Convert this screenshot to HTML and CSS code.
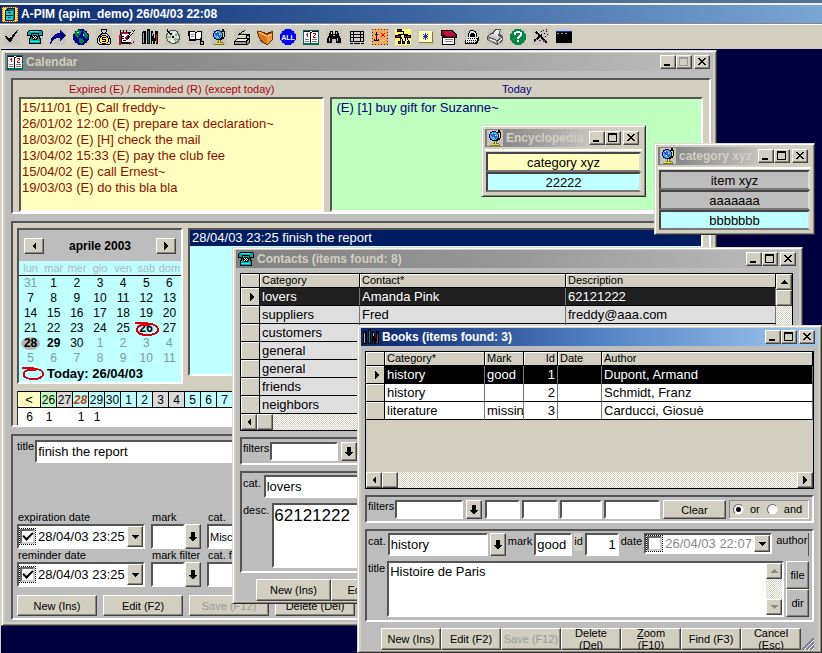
FILE: index.html
```
<!DOCTYPE html>
<html lang="en">
<head>
    <meta charset="UTF-8">
    <meta name="viewport" content="width=device-width, initial-scale=1.0">
    <title>A-PIM (apim_demo)</title>
    <link rel="stylesheet" href="styles.css">
</head>
<body>
    <!-- icon sprite -->
    <svg class="sprite" aria-hidden="true">
        <symbol id="i-app" viewBox="0 0 16 16"><path fill="#f6e34a" d="M0 1h16v15H0z"/><path stroke="#d03a20" stroke-dasharray="1 1" fill="none" d="M0 1.5h16M.5 1v15M15.5 1v15M0 15.5h16"/><path fill="#123" d="M3 4l3-2h7v11l-2 2H3z"/><path fill="#19c8d0" d="M4 5h7v9H4z"/><path fill="#0b7f88" d="M12 3v9l-1 1V5l-6-1 1-1z"/><path fill="#123" d="M4 9h7v1H4zM6 6h3v1H6zM6 11h3v1H6z"/></symbol>
        <symbol id="i-check" viewBox="0 0 16 16"><path d="M13 1h1v1h-1v2h-1v1h-1v2h-1v1H9v2H8v2H7v1H5v-1H4v-1H3v-1H2V8H1V7h2v1h1v1h2v-1h1V8h1V6h1V5h1V4h1V3h1V2h1z"/></symbol>
        <symbol id="i-phone" viewBox="0 0 16 16"><path d="M2 1h12l2 2v4h-3v1l1 2v5H2v-5l1-2V7H0V3z"/><path fill="#0aa" d="M2 2h12l1 1v3h-3V4H4v2H1V3z"/><path fill="#0aa" d="M5 5h6v2l2 4v3H3v-3l2-4z"/><path fill="#0ff" d="M3 2h9v1H3zM5 7h1v1H5zM3 12h9v1H3z"/><path d="M6 6h4v1h1v3h-1v1H6v-1H5V7h1z"/><path fill="#fff" d="M6 7h1v1H6zM8 7h1v1H8zM7 8h1v1H7zM9 8h1v1H9zM6 9h1v1H6zM8 9h1v1H8z"/></symbol>
        <symbol id="i-arrow" viewBox="0 0 16 16"><path fill="#000080" d="M10 1l6 5-6 6V9H7L4 10 2 13 0 16l1-6 3-4 4-2h2z"/></symbol>
        <symbol id="i-globe" viewBox="0 0 16 16"><circle cx="8" cy="8" r="8" fill="#000080"/><circle cx="7" cy="7" r="6" fill="#00a"/><path fill="#083" d="M2 3l3-2 4 1-1 3-3 1 1 2-2 1-2-3-1-1zM10 2l3 1 2 4-1 3-2-1-2-3 1-2zM6 9l4 1 1 2-3 3-2-3z"/><path fill="#9df" d="M4 3h2v1H4zM10 5h1v2h-1z"/></symbol>
        <symbol id="i-money" viewBox="0 0 16 16"><path d="M5 0h6v2l-1 2 3 2 2 4v4l-2 2H3l-2-2v-4l2-4 3-2-1-2z"/><path fill="#ccc" d="M6 1h4v1L9 4H7L6 2zM6 5h4l3 3 1 3v3l-1 1H3l-1-1v-3l1-3z"/><path d="M6 6h4v1h2v2h1v4h-1v1h-2v1H6v-1H4v-1H3V9h1V7h2z"/><path fill="#fe4" d="M6 7h4v1h1v1h1v4h-1v1H5v-1H4V9h1V8h1z"/><path d="M6 8h4v1H7v1h3v3H6v-1h3v-1H6z"/></symbol>
        <symbol id="i-notes" viewBox="0 0 16 16"><path d="M1 3h11v12H1z"/><path fill="#b01040" d="M0 6h2v10h8v-2h5v-3l-2 4-5 1H0z"/><path fill="#fff" d="M3 5h9v8H3z"/><path fill="#b01040" d="M2 3h7v2H2zM5 9l4-3 3 2-4 3z"/><path fill="none" stroke="#000" stroke-width="2" d="M15 1L8 10"/><path stroke="#ddd" d="M15 1l-5 6"/><path d="M3 7h2v1H3zM3 9h2v1H3zM4 11h3v1H4zM1 1h1v3H1zM4 1h1v3H4zM7 1h1v3H7z"/></symbol>
        <symbol id="i-books" viewBox="0 0 16 16"><path d="M0 3h1V2h3v13H0zM5 0h3v15H5zM9 2h2v3h1v4h1v6h-2v-3h-1v3H9zM13 2h3v13h-2v-3h-1z"/><path fill="#aaa" d="M1 4h1v10H1zM10 4h1v3h-1z"/><path fill="#088" d="M6 2h1v12H6z"/><path fill="#c23" d="M14 5h1v9h-1z"/></symbol>
        <symbol id="i-disc" viewBox="0 0 16 16"><path fill="#555" d="M5 1h6v1h2v2h1v2h1v5h-1v2h-1v1h-2v1H6v-1H4v-1H3v-1H2v-2H1V5h1V4h1V2h2z"/><path fill="#ddd" d="M5 2h6v1h1v2h1v2h1v3h-1v2h-1v1h-2v1H6v-1H5v-1H3v-2H2V6h1V4h1V3h1z"/><path fill="#7c5" d="M2 7h4v2H2zM9 9h4v2h-1v1h-1v1h-1v-2H9z"/><path fill="#fff" d="M8 3h2v3H8zM6 10h2v3H6z"/><path fill="#5ab" d="M10 5h2v2h-2z"/><path d="M2 0h1v2h1v1h1v1h2v2H5V5H4V4H3V3H2zM7 7h2v2H7z"/></symbol>
        <symbol id="i-read" viewBox="0 0 16 16"><path d="M0 2h6l2 1 1-1h5v9H8l-1 1H1z"/><path fill="#fff" d="M2 3h4l1 1v7l-1-1H2zM8 4l1-1h4v7H8z"/><path fill="#888" d="M3 5h3v1H3zM3 7h3v1H3z"/><path d="M12 9h2v3h2v4h-4v-3z"/><path fill="#d99" d="M13 13h2v2h-2z"/></symbol>
        <symbol id="i-world" viewBox="0 0 16 16"><path fill="#c4c4bc" d="M0 0h16v16H0z"/><path d="M11 0h2v2h1v6h-1v2h-2v1H8v-1h3V8h1V3h-1z"/><circle cx="7" cy="6" r="5" fill="#000060"/><circle cx="7" cy="6" r="4" fill="#38b8e0"/><path fill="#45c" d="M5 3l3 1 2 3-2 2-2-2-2-1z"/><path fill="#fff" d="M5 3h1v1H5zM8 5h1v1H8zM6 7h1v1H6z"/><path fill="#773" d="M7 11h3v2l3 1v2H3v-1l4-2z"/><path fill="#ed2" d="M12 3h1v5h-1zM8 11h1v3h3v1H4v-1h4z"/></symbol>
        <symbol id="i-drawer" viewBox="0 0 16 16"><path d="M0 12l3-3h9V1l4 1v11l-2 3H0z"/><path fill="#eee" d="M1 12l3-2h9l-1 2z"/><path fill="#999" d="M1 13h11v2H1zM13 12l2-2v3l-2 2z"/><path fill="#d4d0c4" d="M12 0h4v5h-4z"/><path d="M4 5l7-4v1L6 5h7v1H4z"/><path fill="#eee" d="M6 6h6v1H6z"/><path fill="#ee5" d="M5 8h6v1H5z"/><path fill="#bbb" d="M13 7h2v2h-2z"/></symbol>
        <symbol id="i-folder" viewBox="0 0 16 16"><path fill="#6b3208" d="M0 2h4l5 2 7-2v8l-1 2-5 4-6-3-3-6z"/><path fill="#d97818" d="M1 3h3l6 3v9l-5-3-3-5z"/><path fill="#ee9a3c" d="M5 4l5 2 5-2v7l-5 4V8z"/><path fill="#ffc777" d="M1 3h2l7 4v1L2 4zM11 6l4-1v1l-4 1z"/></symbol>
        <symbol id="i-all" viewBox="0 0 16 16"><circle cx="8" cy="8" r="8" fill="#00e"/><text x="8" y="11" class="all-text">ALL</text></symbol>
        <symbol id="i-cal" viewBox="0 0 16 16"><path fill="#066" d="M0 1h16v15H0z"/><path fill="#fff" d="M1 2h14v12H1z"/><path d="M1 2h5l2 1 2-1h5v1h-5L8 4 6 3H1zM8 3v11H7V3z"/><path fill="#c00" d="M4 4h1v4H4zM3 5h1v1H3zM10 4h3v2h-1v1h-1v1h2v1h-3V7l1-1h1V5h-2z"/><path fill="#777" d="M2 10h4v1H2zM9 10h5v1H9zM2 12h4v1H2zM9 12h5v1H9z"/></symbol>
        <symbol id="i-find" viewBox="0 0 16 16"><path d="M4 2h3v3h2V2h3v2h1v3h1v2h1v5h-5v-4H6v4H1V9h1V7h1V4h1z"/><path fill="#ccc" d="M5 3h1v2H5zM10 3h1v2h-1zM3 9h1v3H3zM11 9h1v3h-1zM7 6h2v1H7z"/></symbol>
        <symbol id="i-table" viewBox="0 0 16 16"><path d="M1 2h14v11H1z"/><path fill="#d4d0c4" d="M2 3h2v2H2zM5 3h6v2H5zM12 3h2v2h-2zM2 6h2v2H2zM5 6h6v2H5zM12 6h2v2h-2zM2 9h2v3H2zM5 9h6v3H5zM12 9h2v3h-2z"/><path d="M1 14h3v1H1zM5 14h6v1H5zM12 14h3v1h-3z"/></symbol>
        <symbol id="i-map" viewBox="0 0 16 16"><path fill="#f2a860" d="M0 0h16v16H0z"/><path fill="none" stroke="#4b2600" stroke-dasharray="1 2" d="M.5 0v16M0 .5h16M15.500 0v16M0 15.500h16"/><path d="M4 3h1v9H4zM3 5h3v1H3zM2 10h1v1h3v-1h1v2H2z"/><path fill="#e00" d="M9 4h1v1h2V4h1v1h-1v2h1v1h-1V7h-2v1H9V7h1V5H9z"/><path fill="#fc7" d="M9 11h3v1H9z"/></symbol>
        <symbol id="i-tree" viewBox="0 0 16 16"><path fill="#ffff70" d="M0 0h16v16H0z"/><path d="M6 2h3v3H8V3H6zM3 5h10v1H3zM6 8h1v2h1v2H7v-2H6zM5 9h1v3H5zM10 9h1v3h-1zM12 9h1v2h1v1h-1v-1h-1z"/><path d="M2 0h5v3H2zM0 6h6v3H0zM9 6h7v3H9zM3 12h3v3H3zM7 12h3v3H7zM12 12h3v3h-3z"/><path fill="#c01030" d="M3 1h3v1H3zM1 7h4v1H1zM10 7h5v1h-5zM4 13h1v1H4zM8 13h1v1H8zM13 13h1v1h-1z"/></symbol>
        <symbol id="i-star" viewBox="0 0 16 16"><path fill="#887b30" d="M1 3h14v11H1z"/><path fill="#ffffb4" d="M1 2h13v11H1z"/><path fill="#2030c0" d="M7 4h1v7H7zM5 5h1v1H5zM9 5h1v1H9zM6 6h3v1H6zM5 7h5v1H5zM6 8h3v1H6zM5 9h1v1H5zM9 9h1v1H9z"/></symbol>
        <symbol id="i-pad" viewBox="0 0 16 16"><path d="M0 1h12l4 5v3h-2v7H1V8L0 7z"/><path fill="#c01040" d="M1 2h10l4 5H5L1 6z"/><path fill="#700020" d="M1 5l3 3h11V7H5L1 3z"/><path fill="#fff" d="M2 9h11v6H2z"/><path fill="#888" d="M4 10h8v1H4zM4 12h8v1H4z"/></symbol>
        <symbol id="i-lock" viewBox="0 0 16 16"><path d="M6 1h4v1h2v2h1v4h2v3l-2 4H1v-4l3-3V4h1V2h1z"/><path fill="#ddd" d="M6 2h4v1h1v1h1v4h-1V5h-1V4H7v1H6v3H5V4h1z"/><path fill="#eee" d="M4 8h10l-2 6H2v-3z"/><path stroke="#000" stroke-dasharray="1 1" d="M4 9.500h9M3 11.500h9M3 13.500h9"/></symbol>
        <symbol id="i-print" viewBox="0 0 16 16"><path fill="#555" d="M0 7l4-3 4-4h6l-1 5 3 2v5l-6 4-10-5z"/><path fill="#ccc" d="M1 7l4-2 10 3-5 3z"/><path fill="#999" d="M1 8l9 4v3l-9-4z"/><path fill="#eee" d="M11 12l4-3v2l-4 3zM6 6l3-5h4l-2 6z"/><path fill="#3a3" d="M12 7h1v1h-1z"/><path fill="#fff" d="M3 10l6 2v1l-6-2z"/></symbol>
        <symbol id="i-help" viewBox="0 0 16 16"><circle cx="8" cy="8" r="8" fill="#084"/><path fill="#fff" d="M6 2h4v1h2v4h-1v1h-1v1H9v1H7V8h1V7h1V6h1V4H6v2H4V3h2zM7 11h2v2H7z"/></symbol>
        <symbol id="i-wand" viewBox="0 0 16 16"><path stroke="#000" stroke-width="2" d="M3 3l11 11M1 12l8-6"/><path fill="#aaa" d="M4 5h1v1H4zM7 8h1v1H7zM3 10h1v1H3z"/><path fill="#a13" d="M6 11h2v1H6zM10 11h2v2h-2z"/><path d="M10 1h1v1h-1zM13 2h1v1h-1zM14 5h1v1h-1zM12 7h1v1h-1zM8 2h1v1H8zM13 0h1v1h-1zM11 4h1v1h-1z"/></symbol>
        <symbol id="i-term" viewBox="0 0 16 16"><path d="M0 2h16v12H0z"/><path fill="#1030c0" d="M0 2h16v1H0z"/><path fill="#7ad" d="M1 4h2v1H1zM5 4h2v1H5zM9 4h2v1H9z"/></symbol>
        <symbol id="i-min" viewBox="0 0 12 10"><path d="M2 7h6v2H2z"/></symbol>
        <symbol id="i-max" viewBox="0 0 12 10"><path fill-rule="evenodd" d="M1 0h9v9H1zM2 2v6h7V2z"/></symbol>
        <symbol id="i-close" viewBox="0 0 12 10"><path d="M2 1h2v1h1v1h2V2h1V1h2v1H9v1H8v1H7v1h1v1h1v1h1v1H8V7H7V6H5v1H4v1H2V7h1V6h1V5h1V4H4V3H3V2H2z"/></symbol>
        <symbol id="i-down" viewBox="0 0 10 12"><path d="M3 1h4v5h2L5 11 1 6h2z"/></symbol>
        <symbol id="i-tri-down" viewBox="0 0 8 8"><path d="M0 2h8L4 6z"/></symbol>
        <symbol id="i-tri-up" viewBox="0 0 8 8"><path d="M0 6h8L4 2z"/></symbol>
        <symbol id="i-tri-left" viewBox="0 0 8 8"><path d="M6 0v8L2 4z"/></symbol>
        <symbol id="i-tri-right" viewBox="0 0 8 8"><path d="M2 0v8l4-4z"/></symbol>
        <symbol id="i-ring" viewBox="0 0 24 16"><path fill="none" stroke="#d80010" stroke-width="2" d="M0 2h10l6 1c5 1 7 3 7 6s-5 5-10 5-11-1-11-5 4-5 8-5h5"/></symbol>
    </svg>

    <div class="app">
        <div class="app-strip"></div>
        <header class="app-title">
            <svg class="icon"><use href="#i-app"/></svg>
            <h1>A-PIM (apim_demo) 26/04/03 22:08</h1>
        </header>
        <nav class="toolbar">
            <button aria-label="Done"><svg class="icon"><use href="#i-check"/></svg></button>
            <button aria-label="Contacts"><svg class="icon"><use href="#i-phone"/></svg></button>
            <button aria-label="Go"><svg class="icon"><use href="#i-arrow"/></svg></button>
            <button aria-label="Web"><svg class="icon"><use href="#i-globe"/></svg></button>
            <button aria-label="Money"><svg class="icon"><use href="#i-money"/></svg></button>
            <button aria-label="Notes"><svg class="icon"><use href="#i-notes"/></svg></button>
            <button aria-label="Books"><svg class="icon"><use href="#i-books"/></svg></button>
            <button aria-label="Discs"><svg class="icon"><use href="#i-disc"/></svg></button>
            <button aria-label="Reading"><svg class="icon"><use href="#i-read"/></svg></button>
            <button aria-label="Encyclopedia"><svg class="icon"><use href="#i-world"/></svg></button>
            <button aria-label="Archive"><svg class="icon"><use href="#i-drawer"/></svg></button>
            <button aria-label="Folder"><svg class="icon"><use href="#i-folder"/></svg></button>
            <button aria-label="All"><svg class="icon"><use href="#i-all"/></svg></button>
            <button aria-label="Calendar"><svg class="icon"><use href="#i-cal"/></svg></button>
            <button aria-label="Find"><svg class="icon"><use href="#i-find"/></svg></button>
            <button aria-label="Table"><svg class="icon"><use href="#i-table"/></svg></button>
            <button aria-label="Map"><svg class="icon"><use href="#i-map"/></svg></button>
            <button aria-label="Tree"><svg class="icon"><use href="#i-tree"/></svg></button>
            <button aria-label="Marks"><svg class="icon"><use href="#i-star"/></svg></button>
            <button aria-label="Notepad"><svg class="icon"><use href="#i-pad"/></svg></button>
            <button aria-label="Lock"><svg class="icon"><use href="#i-lock"/></svg></button>
            <button aria-label="Print"><svg class="icon"><use href="#i-print"/></svg></button>
            <button aria-label="Help"><svg class="icon"><use href="#i-help"/></svg></button>
            <button aria-label="Options"><svg class="icon"><use href="#i-wand"/></svg></button>
            <button aria-label="Console"><svg class="icon"><use href="#i-term"/></svg></button>
        </nav>

        <main class="desktop">
            <!-- Calendar -->
            <section class="window calendar">
                <div class="title-bar">
                    <svg class="icon"><use href="#i-cal"/></svg>
                    <h2>Calendar</h2>
                    <button aria-label="Minimize"><svg><use href="#i-min"/></svg></button>
                    <button aria-label="Maximize" class="dim"><svg><use href="#i-max"/></svg></button>
                    <button aria-label="Close" class="close"><svg><use href="#i-close"/></svg></button>
                </div>
                <div class="window-body">
                    <div class="panel beige reminders">
                        <div class="reminder-col expired">
                            <h3>Expired (E) / Reminded (R) (except today)</h3>
                            <ul class="sunken">
                                <li>15/11/01 (E) Call freddy~</li>
                                <li>26/01/02 12:00 (E) prepare tax declaration~</li>
                                <li>18/03/02 (E) [H] check the mail</li>
                                <li>13/04/02 15:33 (E) pay the club fee</li>
                                <li>15/04/02 (E) call Ernest~</li>
                                <li>19/03/03 (E) do this bla bla</li>
                            </ul>
                        </div>
                        <div class="reminder-col today">
                            <h3>Today</h3>
                            <ul class="sunken">
                                <li>(E) [1] buy gift for Suzanne~</li>
                            </ul>
                        </div>
                    </div>

                    <div class="panel beige agenda">
                        <div class="agenda-top">
                            <div class="month sunken">
                                <div class="month-head">
                                    <button class="raised" aria-label="Previous month"><svg><use href="#i-tri-left"/></svg></button>
                                    <strong>aprile 2003</strong>
                                    <button class="raised" aria-label="Next month"><svg><use href="#i-tri-right"/></svg></button>
                                </div>
                                <table>
                                    <thead>
                                        <tr><th>lun</th><th>mar</th><th>mer</th><th>gio</th><th>ven</th><th>sab</th><th>dom</th></tr>
                                    </thead>
                                    <tbody>
                                        <tr><td class="off">31</td><td>1</td><td>2</td><td>3</td><td>4</td><td>5</td><td>6</td></tr>
                                        <tr><td>7</td><td>8</td><td>9</td><td>10</td><td>11</td><td>12</td><td>13</td></tr>
                                        <tr><td>14</td><td>15</td><td>16</td><td>17</td><td>18</td><td>19</td><td>20</td></tr>
                                        <tr><td>21</td><td>22</td><td>23</td><td>24</td><td>25</td><td class="bold current">26<svg class="ring"><use href="#i-ring"/></svg></td><td>27</td></tr>
                                        <tr><td class="bold"><span class="picked">28</span></td><td class="bold">29</td><td>30</td><td class="off">1</td><td class="off">2</td><td class="off">3</td><td class="off">4</td></tr>
                                        <tr><td class="off">5</td><td class="off">6</td><td class="off">7</td><td class="off">8</td><td class="off">9</td><td class="off">10</td><td class="off">11</td></tr>
                                    </tbody>
                                </table>
                                <div class="month-today"><svg><use href="#i-ring"/></svg><strong>Today: 26/04/03</strong></div>
                            </div>
                            <ul class="day-list sunken">
                                <li class="selected">28/04/03 23:25 finish the report</li>
                            </ul>
                        </div>
                        <table class="day-strip">
                            <tr><th class="back">&lt;</th><th class="green">26</th><th class="gray">27</th><th class="now">28</th><th>29</th><th>30</th><th>1</th><th>2</th><th class="gray">3</th><th class="gray">4</th><th>5</th><th>6</th><th>7</th><th></th></tr>
                            <tr><td>6</td><td>1</td><td></td><td>1</td><td>1</td><td></td><td></td><td></td><td></td><td></td><td></td><td></td><td></td><td></td></tr>
                        </table>
                    </div>

                    <form class="panel event-form">
                        <div class="field-row">
                            <label for="evTitle">title</label>
                            <input type="text" id="evTitle" class="grow" value="finish the report">
                        </div>
                        <div class="event-fields">
                            <div class="field">
                                <label for="expDate">expiration date</label>
                                <div class="date-box sunken">
                                    <input type="checkbox" checked aria-label="Use expiration date">
                                    <input type="text" id="expDate" value="28/04/03 23:25">
                                    <button type="button" class="raised" aria-label="Pick date"><svg><use href="#i-tri-down"/></svg></button>
                                </div>
                            </div>
                            <div class="field mark">
                                <label for="evMark">mark</label>
                                <div class="pick-box">
                                    <input type="text" id="evMark">
                                    <button type="button" class="raised pick" aria-label="Pick mark"><svg><use href="#i-down"/></svg></button>
                                </div>
                            </div>
                            <div class="field">
                                <label for="evCat">cat.</label>
                                <input type="text" id="evCat" class="small-text" value="Misc">
                            </div>
                            <div class="field">
                                <label for="remDate">reminder date</label>
                                <div class="date-box sunken">
                                    <input type="checkbox" checked aria-label="Use reminder date">
                                    <input type="text" id="remDate" value="28/04/03 23:25">
                                    <button type="button" class="raised" aria-label="Pick date"><svg><use href="#i-tri-down"/></svg></button>
                                </div>
                            </div>
                            <div class="field mark">
                                <label for="markFilter">mark filter</label>
                                <div class="pick-box">
                                    <input type="text" id="markFilter">
                                    <button type="button" class="raised pick" aria-label="Pick mark filter"><svg><use href="#i-down"/></svg></button>
                                </div>
                            </div>
                            <div class="field">
                                <label for="catFilter">cat. filter</label>
                                <input type="text" id="catFilter">
                            </div>
                        </div>
                        <div class="event-buttons">
                            <button type="button" class="raised">New (Ins)</button>
                            <button type="button" class="raised">Edit (F2)</button>
                            <button type="button" class="raised" disabled>Save (F12)</button>
                            <button type="button" class="raised">Delete (Del)</button>
                        </div>
                    </form>
                </div>
            </section>

            <!-- Encyclopedia -->
            <section class="window small-window encyclopedia">
                <div class="title-bar">
                    <svg class="icon"><use href="#i-world"/></svg>
                    <h2>Encyclopedia</h2>
                    <button aria-label="Minimize"><svg><use href="#i-min"/></svg></button>
                    <button aria-label="Maximize"><svg><use href="#i-max"/></svg></button>
                    <button aria-label="Close" class="close"><svg><use href="#i-close"/></svg></button>
                </div>
                <div class="entry-list">
                    <button class="yellow">category xyz</button>
                    <button class="cyan">22222</button>
                </div>
            </section>

            <section class="window small-window category">
                <div class="title-bar">
                    <svg class="icon"><use href="#i-world"/></svg>
                    <h2>category xyz</h2>
                    <button aria-label="Minimize"><svg><use href="#i-min"/></svg></button>
                    <button aria-label="Maximize"><svg><use href="#i-max"/></svg></button>
                    <button aria-label="Close" class="close"><svg><use href="#i-close"/></svg></button>
                </div>
                <div class="entry-list">
                    <button>item xyz</button>
                    <button>aaaaaaa</button>
                    <button class="cyan">bbbbbbb</button>
                </div>
            </section>

            <!-- Contacts -->
            <section class="window contacts">
                <div class="title-bar">
                    <svg class="icon"><use href="#i-phone"/></svg>
                    <h2>Contacts (items found: 8)</h2>
                    <button aria-label="Minimize"><svg><use href="#i-min"/></svg></button>
                    <button aria-label="Maximize"><svg><use href="#i-max"/></svg></button>
                    <button aria-label="Close" class="close"><svg><use href="#i-close"/></svg></button>
                </div>
                <div class="window-body">
                    <div class="grid-box">
                        <div class="grid-main">
                            <table class="data-grid">
                                <colgroup><col class="c-mark"><col class="c-category"><col class="c-contact"><col></colgroup>
                                <thead><tr><th></th><th>Category</th><th>Contact*</th><th>Description</th></tr></thead>
                                <tbody>
                                    <tr class="active"><th><svg><use href="#i-tri-right"/></svg></th><td>lovers</td><td>Amanda Pink</td><td>62121222</td></tr>
                                    <tr><th></th><td>suppliers</td><td>Fred</td><td>freddy@aaa.com</td></tr>
                                    <tr><th></th><td>customers</td><td></td><td></td></tr>
                                    <tr><th></th><td>general</td><td></td><td></td></tr>
                                    <tr><th></th><td>general</td><td></td><td></td></tr>
                                    <tr><th></th><td>friends</td><td></td><td></td></tr>
                                    <tr><th></th><td>neighbors</td><td></td><td></td></tr>
                                </tbody>
                            </table>
                            <div class="scrollbar vertical">
                                <button class="raised" aria-label="Scroll up"><svg><use href="#i-tri-up"/></svg></button>
                                <span class="thumb raised"></span>
                                <button class="raised last" aria-label="Scroll down"><svg><use href="#i-tri-down"/></svg></button>
                            </div>
                        </div>
                        <div class="scrollbar">
                            <button class="raised" aria-label="Scroll left"><svg><use href="#i-tri-left"/></svg></button>
                            <span class="thumb raised"></span>
                            <button class="raised last" aria-label="Scroll right"><svg><use href="#i-tri-right"/></svg></button>
                        </div>
                    </div>
                    <div class="panel filters">
                        <label for="coFilter">filters</label>
                        <input type="text" id="coFilter" class="w-filter">
                        <button class="raised pick" aria-label="Pick filter"><svg><use href="#i-down"/></svg></button>
                    </div>
                    <form class="panel record-form">
                        <div class="field-row">
                            <label for="coCat">cat.</label>
                            <input type="text" id="coCat" class="grow" value="lovers">
                        </div>
                        <div class="field-row tall">
                            <label for="coDesc">desc.</label>
                            <textarea id="coDesc" class="big-text">62121222</textarea>
                        </div>
                    </form>
                    <div class="record-buttons">
                        <button class="raised">New (Ins)</button>
                        <button class="raised">Edit (F2)</button>
                    </div>
                </div>
            </section>

            <!-- Books -->
            <section class="window books focused">
                <div class="title-bar">
                    <svg class="icon"><use href="#i-books"/></svg>
                    <h2>Books (items found: 3)</h2>
                    <button aria-label="Minimize"><svg><use href="#i-min"/></svg></button>
                    <button aria-label="Maximize"><svg><use href="#i-max"/></svg></button>
                    <button aria-label="Close" class="close"><svg><use href="#i-close"/></svg></button>
                </div>
                <div class="window-body">
                    <div class="grid-box">
                        <div class="grid-main">
                            <table class="data-grid">
                                <colgroup><col class="c-mark"><col class="c-category"><col class="c-rating"><col class="c-id"><col class="c-date"><col></colgroup>
                                <thead><tr><th></th><th>Category*</th><th>Mark</th><th class="num">Id</th><th>Date</th><th>Author</th></tr></thead>
                                <tbody>
                                    <tr class="active"><th><svg><use href="#i-tri-right"/></svg></th><td>history</td><td>good</td><td class="num">1</td><td></td><td>Dupont, Armand</td></tr>
                                    <tr><th></th><td>history</td><td></td><td class="num">2</td><td></td><td>Schmidt, Franz</td></tr>
                                    <tr><th></th><td>literature</td><td>missing</td><td class="num">3</td><td></td><td>Carducci, Giosuè</td></tr>
                                </tbody>
                            </table>
                        </div>
                        <div class="scrollbar">
                            <button class="raised" aria-label="Scroll left"><svg><use href="#i-tri-left"/></svg></button>
                            <span class="thumb raised"></span>
                            <button class="raised last" aria-label="Scroll right"><svg><use href="#i-tri-right"/></svg></button>
                        </div>
                    </div>
                    <form class="panel filters">
                        <label for="boFilter">filters</label>
                        <input type="text" id="boFilter" class="w-filter">
                        <button type="button" class="raised pick" aria-label="Pick filter"><svg><use href="#i-down"/></svg></button>
                        <div class="filter-cells">
                            <input type="text" aria-label="Mark filter">
                            <input type="text" aria-label="Id filter">
                            <input type="text" aria-label="Date filter">
                            <input type="text" aria-label="Author filter">
                        </div>
                        <button type="button" class="raised clear">Clear</button>
                        <div class="mode">
                            <label><input type="radio" name="mode" checked>or</label>
                            <label><input type="radio" name="mode">and</label>
                        </div>
                    </form>
                    <form class="panel record-form">
                        <div class="field-row">
                            <label for="boCat">cat.</label>
                            <input type="text" id="boCat" class="w-cat" value="history">
                            <button type="button" class="raised pick" aria-label="Pick category"><svg><use href="#i-down"/></svg></button>
                            <label for="boMark">mark</label>
                            <input type="text" id="boMark" class="w-mark" value="good">
                            <label for="boId" class="id-label">id</label>
                            <input type="text" id="boId" class="w-id" value="1">
                            <label for="boDate">date</label>
                            <div class="date-box sunken off">
                                <input type="checkbox" aria-label="Use date">
                                <input type="text" id="boDate" value="26/04/03 22:07">
                                <button type="button" class="raised" aria-label="Pick date"><svg><use href="#i-tri-down"/></svg></button>
                            </div>
                            <span class="author">author</span>
                        </div>
                        <div class="field-row tall">
                            <label for="boTitle">title</label>
                            <div class="memo sunken">
                                <textarea id="boTitle">Histoire de Paris</textarea>
                                <div class="scrollbar vertical disabled">
                                    <button type="button" class="raised" aria-label="Scroll up"><svg><use href="#i-tri-up"/></svg></button>
                                    <button type="button" class="raised last" aria-label="Scroll down"><svg><use href="#i-tri-down"/></svg></button>
                                </div>
                            </div>
                            <div class="side-buttons">
                                <button type="button" class="raised">file</button>
                                <button type="button" class="raised">dir</button>
                            </div>
                        </div>
                    </form>
                    <div class="record-buttons">
                        <button class="raised"><span>New (Ins)</span></button>
                        <button class="raised"><span>Edit (F2)</span></button>
                        <button class="raised" disabled><span>Save (F12)</span></button>
                        <button class="raised"><span>Delete<br>(Del)</span></button>
                        <button class="raised"><span><u>Z</u>oom<br>(F10)</span></button>
                        <button class="raised"><span>Find (F3)</span></button>
                        <button class="raised"><span>Cancel<br>(Esc)</span></button>
                        <svg class="grip" viewBox="0 0 12 12"><path stroke="#848094" stroke-width="2" d="M0 12L12 0M4 12l8-8M8 12l4-4"/><path stroke="#fff" d="M2 12L12 2M6 12l6-6M10 12l2-2"/></svg>
                    </div>
                </div>
            </section>
        </main>
    </div>
</body>
</html>
```
FILE: styles.css
```
:root {
    --face: #d2cfc1;
    --gray: #bdbdbd;
    --cyan: #bfffff;
    --yellow: #ffffbf;
    --green: #bfffbf;
    --navy: #000040;
    --select: #001c60;
}

* {
    margin: 0;
    padding: 0;
    box-sizing: border-box;
}

body {
    font-family: "Liberation Sans", Arial, sans-serif;
    font-size: 13px;
    color: #000;
    background-color: var(--navy);
}

button, input, textarea {
    font-family: inherit;
    font-size: 13px;
    color: inherit;
    border: none;
    border-radius: 0;
    outline: none;
}

h1, h2 {
    font-size: 12px;
    font-weight: bold;
    white-space: nowrap;
}

ul {
    list-style: none;
}

table {
    border-spacing: 0;
    table-layout: fixed;
    width: 100%;
}

svg {
    display: block;
    shape-rendering: crispEdges;
}

.sprite {
    display: none;
}

.icon {
    width: 16px;
    height: 16px;
    flex: none;
}

.all-text {
    font-size: 7px;
    font-weight: bold;
    fill: #fff;
    text-anchor: middle;
}

.sunken, input[type="text"], .big-text {
    border: 2px solid;
    border-color: #555 #fff #fff #555;
}

.raised {
    background-color: var(--face);
    border: 1px solid;
    border-color: #fff #444 #444 #fff;
    box-shadow: inset -1px -1px #8a887e;
}

/* application frame */

.app {
    display: flex;
    flex-direction: column;
    height: 100vh;
}

.app-strip {
    height: 5px;
    background-color: #4d7496;
    border-bottom: 2px solid #f0efe8;
}

.app-title {
    display: flex;
    align-items: center;
    gap: 3px;
    height: 19px;
    padding-left: 2px;
    color: #fff;
    background: linear-gradient(to right, #0c2a70, #2f5896 40%, #7aa6d4);
    border-bottom: 1px solid #888;
}

.toolbar {
    display: flex;
    gap: 7px;
    height: 25px;
    padding: 4px 4px 0;
    background-color: var(--face);
    border-top: 1px solid #fff;
}

.toolbar button {
    width: 16px;
    height: 16px;
    background: #c8c6be;
}

.desktop {
    position: relative;
    flex: 1;
    overflow: hidden;
    background-color: var(--navy);
    border-left: 1px solid var(--face);
}

/* windows */

.window {
    position: absolute;
    display: flex;
    flex-direction: column;
    padding: 2px 3px 3px;
    background-color: var(--face);
    border: 1px solid;
    border-color: #dedbd0 #333 #333 #dedbd0;
    box-shadow: inset 1px 1px #fff, inset -1px -1px #8a887e;
}

.calendar {
    left: 0;
    top: 1px;
    width: 716px;
    height: 576px;
}

.encyclopedia {
    left: 480px;
    top: 76px;
    width: 165px;
}

.category {
    left: 653px;
    top: 94px;
    width: 161px;
}

.contacts {
    left: 231px;
    top: 198px;
    width: 571px;
    height: 357px;
}

.books {
    left: 356px;
    top: 276px;
    width: 465px;
    height: 328px;
}

.title-bar {
    display: flex;
    align-items: center;
    flex: none;
    height: 18px;
    padding: 0 3px 0 2px;
    color: var(--face);
    background: linear-gradient(to right, #808080, #999 50%, #bdbdbd);
}

.focused .title-bar {
    color: #fff;
    background: linear-gradient(to right, #0a246a, #4f7fc0 50%, #a0c8f0);
}

.title-bar h2 {
    flex: 1;
    margin-left: 3px;
}

.title-bar button {
    flex: none;
    width: 16px;
    height: 14px;
    padding: 1px;
    background-color: var(--face);
    border: 1px solid;
    border-color: #fff #444 #444 #fff;
    box-shadow: inset -1px -1px #8a887e;
}

.title-bar button svg {
    width: 12px;
    height: 10px;
}

.title-bar .close {
    margin-left: 2px;
}

.title-bar .dim {
    fill: #999;
}

.window-body {
    flex: 1;
    display: flex;
    flex-direction: column;
    gap: 6px;
    padding: 5px 4px 0;
    background-color: var(--gray);
}

.panel {
    background-color: var(--gray);
    border: 2px solid;
    border-color: #555 #fff #fff #555;
}

.beige {
    background-color: var(--face);
}

label, .author {
    font-size: 11px;
    line-height: 13px;
    white-space: nowrap;
}

/* calendar */

.calendar .window-body {
    gap: 7px;
    padding: 7px 2px 2px 6px;
}

.reminders {
    display: grid;
    grid-template-columns: 305fr 372fr;
    gap: 6px;
    height: 136px;
    padding: 0 6px;
}

.reminder-col {
    display: flex;
    flex-direction: column;
}

.reminder-col h3 {
    height: 17px;
    font-size: 11px;
    font-weight: normal;
    line-height: 18px;
    text-align: center;
}

.reminder-col ul {
    flex: 1;
    padding: 1px;
}

.reminder-col li {
    line-height: 16px;
}

.expired {
    color: #8c1000;
}

.expired h3 {
    color: #b00010;
}

.expired ul {
    background-color: var(--yellow);
}

.today {
    color: #000080;
}

.today ul {
    padding-left: 4px;
    background-color: var(--green);
}

.agenda {
    display: flex;
    flex-direction: column;
    gap: 7px;
    height: 206px;
    padding: 5px 6px 0 4px;
}

.agenda-top {
    display: flex;
    align-items: flex-start;
    gap: 5px;
}

.month {
    flex: none;
    width: 166px;
    height: 156px;
    font-size: 12px;
    background-color: var(--cyan);
}

.month-head {
    display: flex;
    align-items: center;
    justify-content: space-between;
    height: 31px;
    padding: 0 5px;
    background-color: var(--gray);
}

.month-head button {
    width: 20px;
    height: 16px;
    padding: 3px 5px;
}

.month-head svg {
    width: 8px;
    height: 8px;
}

.month th {
    height: 15px;
    font-size: 11px;
    font-weight: normal;
    color: #a4bcbc;
    border-bottom: 1px solid #000;
}

.month td {
    height: 15px;
    line-height: 15px;
    text-align: center;
}

.month .off {
    color: #7f9a9a;
}

.month .bold {
    font-weight: bold;
}

.current {
    position: relative;
}

.ring {
    position: absolute;
    left: 0;
    top: 0;
    width: 24px;
    height: 16px;
}

.picked {
    display: block;
    height: 13px;
    margin: 0 2px;
    line-height: 13px;
    background-color: #b4b4b4;
    border-radius: 50%;
}

.month-today {
    display: flex;
    align-items: center;
    gap: 3px;
    height: 15px;
    padding-left: 3px;
    font-size: 13px;
}

.month-today svg {
    width: 22px;
    height: 15px;
}

.day-list {
    flex: 1;
    height: 148px;
    background-color: var(--cyan);
}

.day-list li {
    height: 16px;
    padding-left: 2px;
    line-height: 16px;
    color: #fff;
    background-color: var(--select);
}

.day-strip {
    width: 232px;
    font-size: 12px;
    background-color: #fff;
    border-left: 1px solid #333;
}

.day-strip th, .day-strip td {
    width: 16px;
    height: 17px;
    font-weight: normal;
    text-align: center;
}

.day-strip th {
    background-color: var(--cyan);
    border: 1px solid #000;
    border-left: none;
}

.day-strip .back {
    width: 23px;
    font-size: 13px;
    background-color: var(--yellow);
}

.day-strip .green {
    background-color: var(--green);
}

.day-strip .gray {
    background-color: #dadada;
}

.day-strip .now {
    font-weight: bold;
    font-style: italic;
    color: #b04a10;
}

.event-form {
    display: flex;
    flex-direction: column;
    flex: 1;
    padding: 4px 6px 2px 4px;
}

.field-row {
    display: flex;
    align-items: stretch;
    gap: 3px;
    height: 23px;
}

.event-form .field-row {
    gap: 1px;
}

.grow {
    flex: 1;
}

input[type="text"] {
    min-width: 0;
    padding: 0 1px;
    background-color: #fff;
}

.event-fields {
    display: grid;
    grid-template-columns: 128px 50px 1fr;
    column-gap: 6px;
    margin-top: auto;
}

.field {
    display: flex;
    flex-direction: column;
    height: 38px;
}

.field > label {
    padding-left: 1px;
}

.field > input, .date-box, .pick-box {
    flex: 1;
}

.date-box {
    display: flex;
    align-items: center;
    background-color: #fff;
}

.date-box input[type="text"] {
    flex: 1;
    border: none;
    background: none;
}

.date-box input[type="checkbox"] {
    appearance: none;
    flex: none;
    width: 15px;
    height: 15px;
    margin: 0 2px 0 1px;
    border: 2px solid;
    border-color: #666 #ccc #ccc #666;
    outline: 1px dotted #000;
}

.date-box input:checked::before {
    content: "";
    display: block;
    width: 8px;
    height: 4px;
    margin: 1px;
    border: solid #000;
    border-width: 0 0 2px 2px;
    transform: rotate(-45deg);
}

.date-box button {
    width: 16px;
    height: 100%;
    padding: 0 3px;
}

.date-box.off input {
    color: #8a8a8a;
}

.date-box svg {
    width: 8px;
    height: 8px;
}

.pick-box {
    display: flex;
}

.pick-box input {
    flex: 1;
}

.pick {
    flex: none;
    width: 16px;
    padding: 0 2px;
}

.pick svg {
    width: 10px;
    height: 12px;
}

.small-text {
    font-size: 11px;
}

.event-buttons {
    display: flex;
    gap: 6px;
    margin-top: 8px;
}

.event-buttons button, .record-buttons button, .clear, .side-buttons button {
    font-size: 11px;
}

.event-buttons button {
    width: 80px;
    height: 21px;
}

button:disabled {
    color: #999;
}

/* encyclopedia windows */

.small-window {
    padding: 3px;
}

.small-window .title-bar {
    background: linear-gradient(to right, #7c7c7c, #b0b0b0 50%, var(--face) 75%);
}

.entry-list {
    display: flex;
    flex-direction: column;
    margin-top: 2px;
    padding: 1px;
    border-top: 2px solid #fff;
}

.entry-list button {
    height: 20px;
    background-color: var(--gray);
    border: 2px solid;
    border-color: #444 #ddd #777 #444;
}

.entry-list .yellow {
    background-color: var(--yellow);
}

.entry-list .cyan {
    background-color: var(--cyan);
}

/* data grids */

.grid-box {
    display: flex;
    flex-direction: column;
    border: 1px solid #000;
    background-color: var(--face);
}

.grid-main {
    display: flex;
    align-items: flex-start;
    flex: 1;
}

.contacts .window-body {
    padding-right: 6px;
}

.contacts .data-grid td {
    background-color: #dedede;
}

.books .grid-box {
    height: 138px;
}

.data-grid th, .data-grid td {
    overflow: hidden;
    white-space: nowrap;
    text-align: left;
    border-right: 1px solid #777;
    border-bottom: 1px solid #000;
}

.data-grid td {
    height: 18px;
    padding: 0 2px;
    line-height: 17px;
    background-color: #fff;
}

.data-grid th {
    background-color: var(--face);
    border-right-color: #000;
}

.data-grid thead th {
    height: 14px;
    padding: 0 2px;
    font-size: 11px;
    font-weight: normal;
    line-height: 13px;
    box-shadow: inset 1px 1px #fff;
}

.data-grid tbody th {
    padding-left: 6px;
    box-shadow: inset 1px 1px #fff;
}

.data-grid tbody svg {
    width: 10px;
    height: 12px;
}

.data-grid .num {
    text-align: right;
}

.data-grid .active td {
    color: #fff;
    background-color: #000;
}

.contacts .data-grid .active td {
    background-color: #202020;
}

.c-mark {
    width: 19px;
}

.c-category {
    width: 100px;
}

.c-contact {
    width: 206px;
}

.c-rating {
    width: 39px;
}

.c-id {
    width: 34px;
}

.c-date {
    width: 44px;
}

.scrollbar {
    display: flex;
    flex: none;
    height: 16px;
    background: repeating-conic-gradient(#fff 0 25%, var(--face) 0 50%) 0 0 / 2px 2px;
}

.scrollbar button, .thumb {
    flex: none;
    width: 16px;
    height: 16px;
    padding: 3px;
}

.scrollbar svg {
    width: 8px;
    height: 8px;
}

.scrollbar .last {
    margin-left: auto;
}

.vertical {
    flex-direction: column;
    width: 16px;
    height: auto;
    align-self: stretch;
}

.vertical .last {
    margin: auto 0 0;
}

.disabled {
    fill: #8a887e;
}

/* filters and record forms */

.filters {
    display: flex;
    gap: 3px;
    height: 28px;
    padding: 3px 3px 2px 1px;
}

.filters > label {
    flex: none;
    width: 24px;
}

.w-filter {
    flex: none;
    width: 68px;
}

.filter-cells {
    display: flex;
    gap: 2px;
    flex: 1;
    min-width: 0;
}

.filter-cells input {
    flex: 35;
    width: 0;
}

.filter-cells input:nth-child(3) {
    flex: 43;
}

.filter-cells input:nth-child(4) {
    flex: 60;
}

.clear {
    flex: none;
    width: 63px;
}

.mode {
    display: flex;
    align-items: center;
    flex: none;
    gap: 7px;
    width: 80px;
    padding-left: 3px;
    background-color: var(--face);
    border: 1px solid;
    border-color: #888 #fff #fff #888;
}

.mode label {
    display: flex;
    align-items: center;
    gap: 6px;
}

.mode input {
    appearance: none;
    width: 11px;
    height: 11px;
    background-color: #fff;
    border: 1px solid;
    border-color: #666 #ddd #ddd #666;
    border-radius: 50%;
}

.mode input:checked {
    background: radial-gradient(#000 2px, #fff 3px);
}

.record-form {
    display: flex;
    flex-direction: column;
    gap: 5px;
    padding: 2px 3px 3px 1px;
}

.contacts .record-form {
    height: 102px;
}

.books .record-form {
    height: 93px;
}

.books .field-row {
    gap: 2px;
}

.record-form label {
    padding-top: 1px;
}

.record-form .field-row:first-child label {
    height: 18px;
    padding-top: 2px;
}

.tall {
    flex: 1;
    height: auto;
}

textarea {
    flex: 1;
    min-width: 0;
    padding: 1px 2px;
    line-height: 16px;
    resize: none;
    overflow: hidden;
    background-color: #fff;
}

.big-text {
    padding: 1px 0;
    font-size: 17px;
    line-height: 20px;
}

.w-cat {
    flex: none;
    width: 100px;
}

.w-mark {
    flex: none;
    width: 38px;
}

.w-id {
    flex: none;
    width: 34px;
    text-align: right;
}

.id-label {
    background-color: var(--face);
}

.record-form .date-box {
    flex: none;
    width: 128px;
    height: 21px;
}

.record-form .author {
    flex: 1;
    padding: 1px 0 0 2px;
    border-right: 1px solid #555;
}

.memo {
    display: flex;
    flex: 1;
    background-color: #fff;
}

.memo textarea {
    padding-left: 1px;
}

.side-buttons {
    display: flex;
    flex-direction: column;
    width: 23px;
}

.side-buttons button {
    flex: 1;
    background-color: var(--gray);
}

.record-buttons {
    display: flex;
    height: 22px;
    padding-left: 16px;
}

.record-buttons button {
    display: flex;
    align-items: center;
    justify-content: center;
    width: 60px;
    line-height: 12px;
    text-align: center;
    white-space: nowrap;
    overflow: hidden;
}

.contacts .record-buttons button {
    width: 75px;
}

.grip {
    width: 12px;
    height: 12px;
    margin: auto 0 0 auto;
}
```
